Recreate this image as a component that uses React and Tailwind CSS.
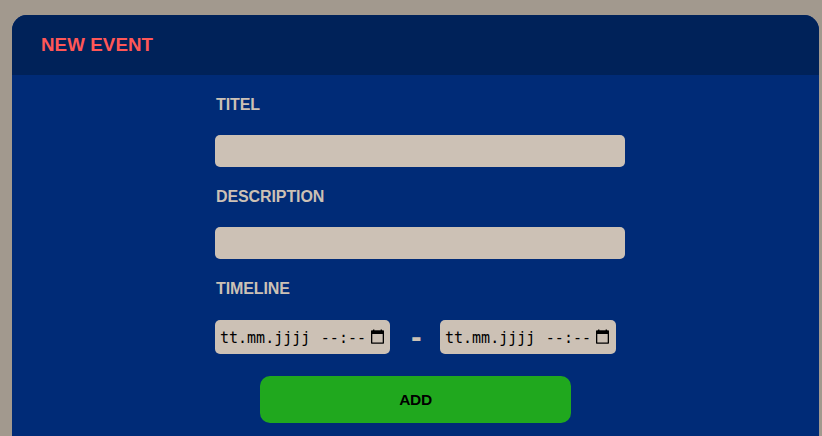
import React from "react";

function Label({ children }) {
  return <label className="block h-[18px] pt-px pl-px text-[16px] leading-[18px] font-bold tracking-[-0.1px] whitespace-nowrap">{children}</label>;
}

function CalendarIcon() {
  return (
    <svg className="mb-px ml-[5px] h-[15px] w-[13px] shrink-0" viewBox="0 0 13 15" fill="none">
      <path d="M2 0.4h1.4v2H2zM9.6 0.4H11v2H9.6z" fill="#000" />
      <path d="M0.65 2.2h11.7v11.9H0.65z" stroke="#000" strokeWidth="1.3" strokeLinejoin="round" />
      <path d="M0.3 1.6h12.4v3.4H0.3z" fill="#000" />
    </svg>
  );
}

function DateField({ className }) {
  return (
    <div className={"flex h-[34px] items-center rounded-[5px] bg-[#ccc1b5] pl-[5px] text-black " + className}>
      <span className="flex w-[146px] justify-between pt-[2px] font-['DejaVu_Sans_Mono',monospace] text-[15px] leading-[18px] whitespace-pre">
        <span>tt.mm.jjjj</span>
        <span>--:--</span>
      </span>
      <CalendarIcon />
    </div>
  );
}

export default function App() {
  return (
    <main className="h-[436px] w-[822px] overflow-hidden bg-[#a2998e] pt-[15px] pl-3 font-['Liberation_Sans',Arial,sans-serif] text-[#ccc1b5]">
      <section className="h-[421px] w-[807px] overflow-hidden rounded-t-[15px] bg-[#002b77]">
        <header className="flex h-[60px] items-center bg-[#002259] pl-[29px]">
          <h1 className="text-[18.72px] leading-5 font-bold tracking-[0.1px] whitespace-nowrap text-[#ff5757]">NEW EVENT</h1>
        </header>
        <form className="ml-[203px] w-[410px] pt-5">
          <Label>TITEL</Label>
          <input className="mt-[22px] block h-8 w-full rounded-[5px] bg-[#ccc1b5] outline-none" />
          <div className="mt-5">
            <Label>DESCRIPTION</Label>
          </div>
          <input className="mt-[22px] block h-8 w-full rounded-[5px] bg-[#ccc1b5] outline-none" />
          <div className="mt-5">
            <Label>TIMELINE</Label>
          </div>
          <div className="mt-[23px] flex">
            <DateField className="w-[175px]" />
            <div className="flex w-[50px] items-center justify-center pt-[2px] pl-px">
              <span className="h-1 w-[9px] text-center text-[32px] leading-[0px] font-bold">-</span>
            </div>
            <DateField className="w-[176px]" />
          </div>
          <button type="button" className="mt-[22px] ml-[45px] block h-[47px] w-[311px] rounded-[10px] bg-[#20a81e] text-[15.5px] font-bold tracking-[-0.3px] text-black">ADD</button>
        </form>
      </section>
    </main>
  );
}
